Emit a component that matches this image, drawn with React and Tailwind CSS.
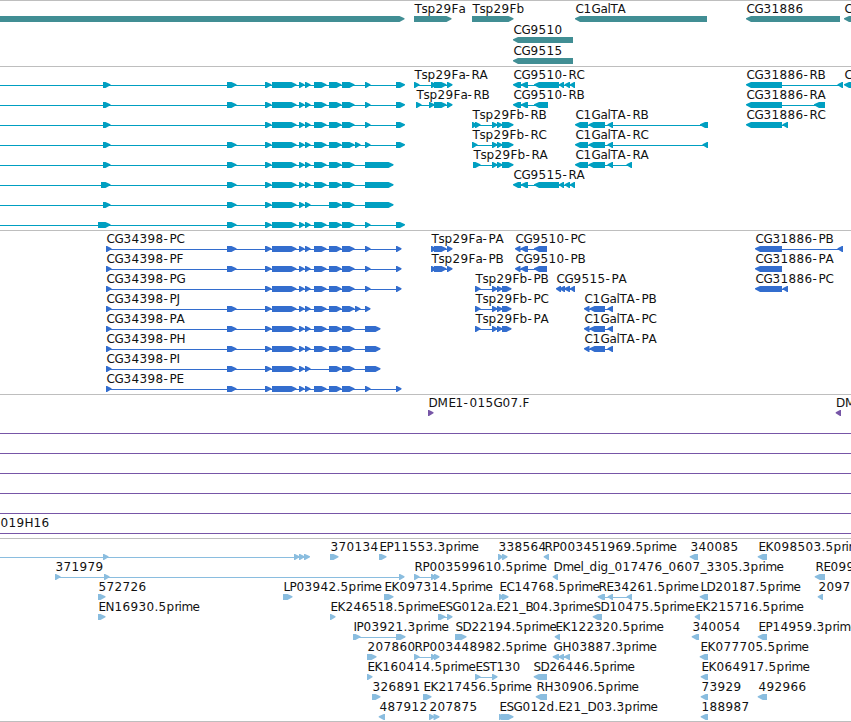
import React from "react";

const WIDTH = 851;

// advance of each label glyph in px, anything missing is 8
const ADVANCE = {
  A: 9, B: 7, D: 9, E: 7, F: 7, G: 9, H: 9, I: 3, J: 4, L: 6, M: 11, N: 9,
  P: 7, S: 7, T: 7, a: 7, e: 7, i: 3, l: 3, m: 11, r: 4, s: 6,
  "-": 6, ".": 4, _: 6,
};

// feature: [row, start, label, direction, spans, lineStart?, lineEnd?]
const genes = [
  [0, 0, "", 1, [[-10, 404.5]]],
  [0, 414, "Tsp29Fa", 1, [[414, 451.5]]],
  [0, 472, "Tsp29Fb", 1, [[472, 513.5]]],
  [0, 575, "C1GalTA", -1, [[575, 707]]],
  [0, 746, "CG31886", -1, [[746, 840]]],
  [0, 844, "C", -1, [[844, 870]]],
  [1, 513, "CG9510", -1, [[513, 573]]],
  [2, 513, "CG9515", -1, [[513, 573]]],
];

const first = [103, 110.5];
const ex2 = [227, 236.5];
const ex3 = [[265, 271.5], [272, 296.5], [299, 304.5], [305, 310.5]];
const ex4 = [314, 326.5];
const ex5 = [[329, 341.5], [342, 354.5]];
const ex6 = [355, 360.5];
const ex7 = [365, 370.5];
const last = [396, 405];
const longEnd = [365, 393.5];

const faTail = [[434, 446.5], [447, 452.5]];
const fbTail = [[492, 497.5], [497, 502.5], [502, 513.5]];
const cg95Head = [[513, 521], [521, 528]];
const cg95Full = [...cg95Head, [534, 559], [559, 564], [564.5, 570], [570, 575]];
const galHead = [[575, 588], [588.5, 605], [607.5, 613]];

const transcripts = [
  [0, 0, "", 1, [first, ex2, ...ex3, ex4, ...ex5, ex7, last], 0],
  [1, 0, "", 1, [first, ex2, ...ex3, ex4, ...ex5, ex7, last], 0],
  [2, 0, "", 1, [first, ...ex3, ex4, ...ex5, ex7, last], 0],
  [3, 0, "", 1, [first, ex2, ...ex3, ex4, ...ex5, ex6, ex7, last], 0],
  [4, 0, "", 1, [first, ex2, ...ex3, ex4, ...ex5, longEnd], 0],
  [5, 0, "", 1, [[101, 110.5], ex2, ...ex3, ex4, ...ex5, longEnd], 0],
  [6, 0, "", 1, [first, ex2, ...ex3, ...ex5, longEnd], 0],
  [7, 0, "", 1, [[98, 110.5], ex2, ...ex3, ex4, ...ex5, ex7, last], 0],
  [0, 414, "Tsp29Fa-RA", 1, [[414, 419.5], [431, 436.5], ...faTail]],
  [1, 416, "Tsp29Fa-RB", 1, [[416, 421.5], [429, 434.5], ...faTail]],
  [2, 472, "Tsp29Fb-RB", 1, [[472, 477], [475, 480.5], ...fbTail]],
  [3, 472, "Tsp29Fb-RC", 1, [[472, 477.5], ...fbTail]],
  [4, 473, "Tsp29Fb-RA", 1, [[473, 480.5], ...fbTail]],
  [0, 513, "CG9510-RC", -1, cg95Full],
  [1, 513, "CG9510-RB", -1, [...cg95Head, [534, 548]]],
  [5, 513, "CG9515-RA", -1, cg95Full],
  [2, 575, "C1GalTA-RB", -1, [...galHead, [700, 708]]],
  [3, 575, "C1GalTA-RC", -1, [...galHead, [702.5, 708]]],
  [4, 575, "C1GalTA-RA", -1, [...galHead, [626.5, 632]]],
  [0, 746, "CG31886-RB", -1, [[746, 782], [837.5, 843]]],
  [1, 746, "CG31886-RA", -1, [[746, 782], [814, 825]]],
  [2, 746, "CG31886-RC", -1, [[746, 782], [782.5, 788]]],
  [0, 844, "C", -1, [[844, 870]]],
];

const pFirst = [106, 111.5];
const pLast = [396, 401.5];
const pLong = [365, 380.5];
const pFa = [[431, 436.5], [434, 446.5], [447, 452.5]];
const pFb = [[475, 480.5], [492, 497.5], [497, 502.5], [502, 511.5]];
const p9510 = [[515, 520.5], [520.5, 528], [534, 547]];
const pGal = [[584, 589.5], [589.5, 605], [607.5, 613]];

const proteins = [
  [0, 106, "CG34398-PC", 1, [pFirst, ex2, ...ex3, ex4, ...ex5, ex7, pLast]],
  [1, 106, "CG34398-PF", 1, [pFirst, ex2, ...ex3, ex4, ...ex5, ex7, pLast]],
  [2, 106, "CG34398-PG", 1, [pFirst, ...ex3, ex4, ...ex5, ex7, pLast]],
  [3, 106, "CG34398-PJ", 1, [pFirst, ex2, ...ex3, ex4, ...ex5, ex6, ex7]],
  [4, 106, "CG34398-PA", 1, [pFirst, ex2, ...ex3, ex4, ...ex5, pLong]],
  [5, 106, "CG34398-PH", 1, [pFirst, ex2, ...ex3, ex4, ...ex5, pLong]],
  [6, 106, "CG34398-PI", 1, [pFirst, ex2, ...ex3, ...ex5, pLong]],
  [7, 106, "CG34398-PE", 1, [pFirst, ex2, ...ex3, ex4, ...ex5, ex7, pLast]],
  [0, 431, "Tsp29Fa-PA", 1, pFa],
  [1, 431, "Tsp29Fa-PB", 1, pFa],
  [2, 475, "Tsp29Fb-PB", 1, pFb],
  [3, 475, "Tsp29Fb-PC", 1, pFb],
  [4, 475, "Tsp29Fb-PA", 1, pFb],
  [0, 515, "CG9510-PC", -1, p9510],
  [1, 515, "CG9510-PB", -1, p9510],
  [2, 556, "CG9515-PA", -1, [[556, 561], [559.5, 565], [564, 570], [570, 575]]],
  [3, 584, "C1GalTA-PB", -1, pGal],
  [4, 584, "C1GalTA-PC", -1, pGal],
  [5, 584, "C1GalTA-PA", -1, pGal],
  [0, 755, "CG31886-PB", -1, [[755, 782], [837.5, 843]]],
  [1, 755, "CG31886-PA", -1, [[755, 782]]],
  [2, 755, "CG31886-PC", -1, [[755, 782], [782.5, 788]]],
];

const bacs = [
  [0, 428, "DME1-015G07.F", 1, [[428, 433.5]]],
  [0, 835.5, "DM", -1, [[835.7, 841]]],
  [1, 0, "", 1, [], 0, WIDTH],
  [2, 0, "", 1, [], 0, WIDTH],
  [3, 0, "", 1, [], 0, WIDTH],
  [4, 0, "", 1, [], 0, WIDTH],
  [5, 0, "", 1, [], 0, WIDTH],
  [6, 0, "019H16", 1, [], 0, WIDTH],
];

const ests = [
  [0, 0, "", 1, [[103, 108.5], [294, 299.5], [299, 304.5], [304, 310]], 0],
  [0, 330, "370134", 1, [[330, 338.5]]],
  [0, 379, "EP11553.3prime", 1, [[379, 386.5]]],
  [0, 498, "338564", 1, [[498, 503], [502, 507.5]]],
  [0, 544, "RP003451969.5prime", -1, [[543.7, 549]]],
  [0, 690, "340085", -1, [[689.7, 698]]],
  [0, 758, "EK098503.5prime", -1, [[757.7, 767]]],
  [1, 55, "371979", 1, [[55, 60.5], [104, 109.5], [399, 404.5]]],
  [1, 414, "RP003599610.5prime", 1, [[414, 419.5], [431, 436], [434, 439.5]]],
  [1, 553, "Dmel_dig_017476_0607_3305.3prime", -1, [[552.7, 558]]],
  [1, 815, "RE099", -1, [[814.7, 825]]],
  [2, 98, "572726", 1, [[98, 105.5]]],
  [2, 283, "LP03942.5prime", 1, [[283, 292.5]]],
  [2, 384, "EK097314.5prime", 1, [[384, 393.5]]],
  [2, 499, "EC14768.5prime", 1, [[499, 504], [502, 508.5]]],
  [2, 598, "RE34261.5prime", -1, [[597.7, 605], [607.7, 613], [626.7, 632]]],
  [2, 700, "LD20187.5prime", -1, [[699.7, 708]]],
  [2, 818, "2097", -1, [[817.7, 823]]],
  [3, 98, "EN16930.5prime", 1, [[98, 105.5]]],
  [3, 330, "EK246518.5prime", 1, [[330, 335.5]]],
  [3, 438, "ESG012a.E21_B04.3prime", 1, [[438, 445.5], [447, 452.5]]],
  [3, 593, "SD10475.5prime", -1, [[592.7, 602]]],
  [3, 695, "EK215716.5prime", -1, [[694.7, 700]]],
  [4, 353, "IP03921.3prime", 1, [[353, 360.5], [396, 405.5]]],
  [4, 455, "SD22194.5prime", 1, [[455, 466.5]]],
  [4, 555, "EK122320.5prime", -1, [[554.7, 560]]],
  [4, 692, "340054", -1, [[691.7, 699]]],
  [4, 758, "EP14959.3prime", -1, [[757.7, 767]]],
  [5, 367, "207860", 1, [[367, 376.5]]],
  [5, 414, "RP003448982.5prime", 1, [[414, 419.5], [431, 436], [434, 439.5]]],
  [5, 553, "GH03887.3prime", -1, [[552.7, 559], [558.5, 564], [564, 570]]],
  [5, 700, "EK077705.5prime", -1, [[699.7, 708]]],
  [6, 367, "EK160414.5prime", 1, [[367, 372.5]]],
  [6, 475, "EST130", 1, [[475, 480.5], [492, 497.5]]],
  [6, 533, "SD26446.5prime", -1, [[533.7, 547]]],
  [6, 701, "EK064917.5prime", -1, [[700.7, 708]]],
  [7, 372, "326891", 1, [[372, 380.5]]],
  [7, 423, "EK217456.5prime", 1, [[423, 431.5]]],
  [7, 536, "RH30906.5prime", -1, [[535.7, 547]]],
  [7, 701, "73929", -1, [[700.7, 708]]],
  [7, 758, "492966", -1, [[757.7, 767]]],
  [8, 379, "487912", -1, [[378.7, 385]]],
  [8, 429, "207875", 1, [[429, 434.5], [433.5, 439.5]]],
  [8, 499, "ESG012d.E21_D03.3prime", 1, [[499, 504], [501, 513.5]]],
  [8, 701, "188987", -1, [[700.7, 708]]],
];

const glyphPositions = (label, start) => {
  let x = start + 0.5;
  return [...label]
    .map((char) => {
      const current = x;
      x += ADVANCE[char] ?? 8;
      return current;
    })
    .join(" ");
};

// exon bar, pointed on the side the strand runs to
const Span = ({ from, to, y, direction }) => {
  const head = Math.min(to - from - 1, 5);
  const points =
    direction > 0
      ? `${from},${y} ${to - head},${y} ${to},${y + 2.3} ${to},${y + 3.3} ${to - head},${y + 6} ${from},${y + 6}`
      : `${to},${y} ${from + head},${y} ${from},${y + 2.3} ${from},${y + 3.3} ${from + head},${y + 6} ${to},${y + 6}`;
  return <polygon points={points} />;
};

const Feature = ({ feature, rowHeight }) => {
  const [row, start, label, direction, spans, lineStart, lineEnd] = feature;
  const top = row * rowHeight;
  const x1 = lineStart ?? spans[0][0] + 1;
  const x2 = lineEnd ?? spans[spans.length - 1][1] - 1;
  return (
    <g>
      {(spans.length !== 1 || lineEnd) && (
        <rect x={x1} y={top + 18} width={x2 - x1} height="1" />
      )}
      {spans.map(([from, to]) => (
        <Span key={from} from={from} to={to} y={top + 15} direction={direction} />
      ))}
      {label && (
        <text x={glyphPositions(label, start)} y={top + 12} className="fill-[#111111]">
          {label}
        </text>
      )}
    </g>
  );
};

const Track = ({ features, color, className, rowHeight = 20 }) => (
  <section className={`border-t border-[#bebebe] overflow-hidden ${className}`}>
    <svg
      width={WIDTH}
      height="100%"
      className={`block font-['DejaVu_Sans',sans-serif] text-[12px] ${color}`}
    >
      {features.map((feature, i) => (
        <Feature key={i} feature={feature} rowHeight={rowHeight} />
      ))}
    </svg>
  </section>
);

const App = () => {
  return (
    <main className="w-[851px] h-[722px] bg-white overflow-hidden flex flex-col">
      <Track features={genes} color="fill-[#418e94]" className="h-[66px]" rowHeight={21} />
      <Track features={transcripts} color="fill-[#009fc1]" className="h-[164px]" />
      <Track features={proteins} color="fill-[#336dce]" className="h-[164px]" />
      <Track features={bacs} color="fill-[#7756a7]" className="h-[144px]" />
      <Track features={ests} color="fill-[#8abddf]" className="h-[184px] border-b" />
    </main>
  );
};

export default App;
